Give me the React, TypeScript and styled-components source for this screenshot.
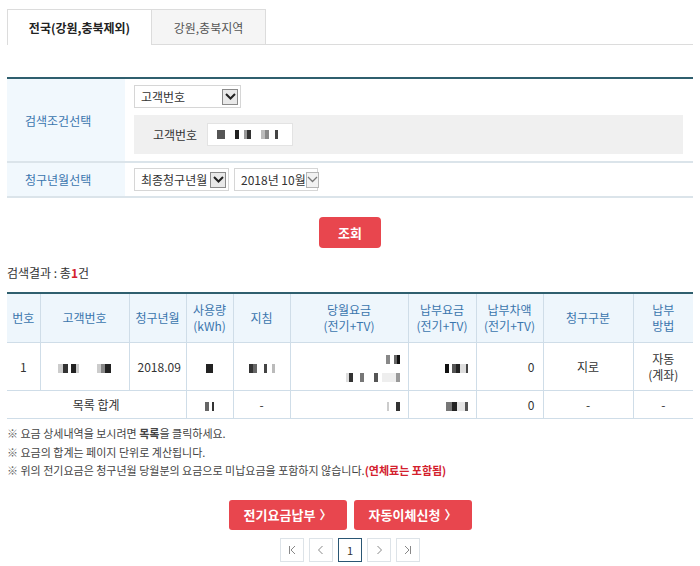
import React from "react";
import styled, { createGlobalStyle } from "styled-components";

type Blk = [number, string];

const GlobalStyle = createGlobalStyle`
  body {
    margin: 0;
    background: #fff;
    font-family: "Noto Sans CJK KR", "Noto Sans", sans-serif;
    font-size: 12px;
    color: #333;
  }
`;

// masked (pixelated) values from the original
const masks: Record<string, Blk[]> = {
    input: [[8, "#555"], [10, "t"], [4, "#222"], [5, "t"], [3, "#999"], [4, "#333"], [10, "t"], [4, "#bbb"], [4, "#888"], [6, "t"], [3, "#444"]],
    custNo: [[5, "#ccc"], [5, "#333"], [3, "t"], [5, "#222"], [3, "#ccc"], [18, "t"], [4, "#ccc"], [4, "#888"], [6, "#222"]],
    usage: [[7, "#222"]],
    meter: [[4, "#333"], [4, "#666"], [7, "t"], [3, "#444"], [5, "t"], [3, "#bbb"]],
    bill1: [[4, "#888"], [4, "t"], [3, "#666"], [3, "#111"]],
    bill2: [[3, "#ddd"], [4, "#333"], [7, "t"], [4, "#777"], [10, "t"], [4, "#555"], [4, "t"], [14, "#eee"], [4, "#999"]],
    paid: [[4, "#111"], [3, "t"], [4, "#555"], [4, "#222"], [6, "#ddd"], [2, "#444"]],
    sumUsage: [[4, "#666"], [3, "t"], [2, "#333"]],
    sumBill: [[2, "#ccc"], [7, "t"], [4, "#333"]],
    sumPaid: [[6, "#777"], [5, "#222"], [8, "#e5e5e5"], [3, "#555"]],
};

function Masked({ name }: { name: string }) {
    return (
        <MaskRow>
            {masks[name].map(([w, c], i) => (
                <Pix key={i} $w={w} $c={c === "t" ? "transparent" : c} />
            ))}
        </MaskRow>
    );
}

function Chevron({ light }: { light?: boolean }) {
    return (
        <ArrowBox $light={light}>
            <svg width="11" height="7" viewBox="0 0 11 7">
                <path d="M1 1 L5.5 5.5 L10 1" fill="none" stroke={light ? "#777" : "#222"} strokeWidth={light ? 1.3 : 2} />
            </svg>
        </ArrowBox>
    );
}

function Select({ label, width, light }: { label: string; width: number; light?: boolean }) {
    return (
        <SelectBox $w={width}>
            <span>{label}</span>
            <Chevron light={light} />
        </SelectBox>
    );
}

function PageIcon({ d }: { d: string }) {
    return (
        <svg width="10" height="10" viewBox="0 0 10 10">
            <path d={d} fill="none" stroke="#888" strokeWidth="1" />
        </svg>
    );
}

function App() {
    return (
        <Page>
            <GlobalStyle />
            <TabBar>
                <Tab $active>전국(강원,충북제외)</Tab>
                <Tab>강원,충북지역</Tab>
            </TabBar>

            <FormTable>
                <tbody>
                    <tr>
                        <Label>검색조건선택</Label>
                        <Field>
                            <Select label="고객번호" width={107} />
                            <CondBox>
                                <span>고객번호</span>
                                <InputBox><Masked name="input" /></InputBox>
                            </CondBox>
                        </Field>
                    </tr>
                    <tr>
                        <Label>청구년월선택</Label>
                        <Field>
                            <Inline>
                                <Select label="최종청구년월" width={95} />
                                <Select label="2018년 10월" width={84} light />
                            </Inline>
                        </Field>
                    </tr>
                </tbody>
            </FormTable>

            <Center>
                <SearchButton>조회</SearchButton>
            </Center>

            <ResultCount>검색결과 : 총<b>1</b>건</ResultCount>

            <DataTable>
                <colgroup>
                    {[33, 89, 57, 47, 57, 118, 68, 67, 90, 60].map((w, i) => (
                        <col key={i} style={{ width: w }} />
                    ))}
                </colgroup>
                <thead>
                    <tr>
                        <Th>번호</Th>
                        <Th>고객번호</Th>
                        <Th>청구년월</Th>
                        <Th>사용량<br />(kWh)</Th>
                        <Th>지침</Th>
                        <Th>당월요금<br />(전기+TV)</Th>
                        <Th>납부요금<br />(전기+TV)</Th>
                        <Th>납부차액<br />(전기+TV)</Th>
                        <Th>청구구분</Th>
                        <Th>납부<br />방법</Th>
                    </tr>
                </thead>
                <tbody>
                    <DataRow>
                        <Td>1</Td>
                        <Td><Masked name="custNo" /></Td>
                        <Td>2018.09</Td>
                        <Td><Masked name="usage" /></Td>
                        <Td><Masked name="meter" /></Td>
                        <Td $align="right"><MaskStack><Masked name="bill1" /><Masked name="bill2" /></MaskStack></Td>
                        <Td $align="right"><Masked name="paid" /></Td>
                        <Td $align="right">0</Td>
                        <Td>지로</Td>
                        <Td>자동<br />(계좌)</Td>
                    </DataRow>
                    <SumRow>
                        <Td colSpan={3}>목록 합계</Td>
                        <Td><Masked name="sumUsage" /></Td>
                        <Td>-</Td>
                        <Td $align="right"><Masked name="sumBill" /></Td>
                        <Td $align="right"><Masked name="sumPaid" /></Td>
                        <Td $align="right">0</Td>
                        <Td>-</Td>
                        <Td>-</Td>
                    </SumRow>
                </tbody>
            </DataTable>

            <Notes>
                <li>요금 상세내역을 보시려면 <b>목록</b>을 클릭하세요.</li>
                <li>요금의 합계는 페이지 단위로 계산됩니다.</li>
                <li>위의 전기요금은 청구년월 당월분의 요금으로 미납요금을 포함하지 않습니다.<Red>(연체료는 포함됨)</Red></li>
            </Notes>

            <Center>
                <Actions>
                    <ActionButton>전기요금납부 <Gt>〉</Gt></ActionButton>
                    <ActionButton>자동이체신청 <Gt>〉</Gt></ActionButton>
                </Actions>
            </Center>

            <Pager>
                <PageBtn><PageIcon d="M2.5 1 V9 M8 1 L4 5 L8 9" /></PageBtn>
                <PageBtn><PageIcon d="M6.5 1 L2.5 5 L6.5 9" /></PageBtn>
                <PageBtn $active>1</PageBtn>
                <PageBtn><PageIcon d="M3.5 1 L7.5 5 L3.5 9" /></PageBtn>
                <PageBtn><PageIcon d="M2 1 L6 5 L2 9 M7.5 1 V9" /></PageBtn>
            </Pager>
        </Page>
    );
}

const Page = styled.div`
    width: 686px;
    padding: 9px 7px 0;
`;

const TabBar = styled.div`
    display: flex;
    height: 35px;
    border-bottom: 1px solid #dcdcdc;
`;

const Tab = styled.div<{ $active?: boolean }>`
    display: flex;
    align-items: center;
    justify-content: center;
    box-sizing: border-box;
    width: ${(p) => (p.$active ? 145 : 114)}px;
    height: ${(p) => (p.$active ? 36 : 35)}px;
    border: 1px solid #dcdcdc;
    border-bottom: none;
    border-left-width: ${(p) => (p.$active ? 1 : 0)}px;
    background: ${(p) => (p.$active ? "#fff" : "#f5f5f5")};
    color: ${(p) => (p.$active ? "#222" : "#555")};
    font-weight: ${(p) => (p.$active ? 700 : 400)};
    font-size: 12px;
`;

const FormTable = styled.table`
    width: 686px;
    margin-top: 32px;
    border-collapse: collapse;
    border-top: 2px solid #2f5f6e;
    tr + tr td, tr + tr th {
        border-top: 2px solid #dbe4ea;
    }
    tr:last-child td, tr:last-child th {
        border-bottom: 2px solid #dbe4ea;
    }
    tr + tr td {
        padding-top: 5px;
        padding-bottom: 5px;
    }
`;

const Label = styled.th`
    width: 118px;
    padding: 0 0 0 18px;
    box-sizing: border-box;
    background: #f1f8fd;
    color: #3a75ad;
    font-weight: 400;
    font-size: 12px;
    text-align: left;
`;

const Field = styled.td`
    padding: 6px 10px 7px 9px;
`;

const Inline = styled.div`
    display: flex;
    gap: 5px;
`;

const SelectBox = styled.div<{ $w: number }>`
    display: flex;
    align-items: center;
    justify-content: space-between;
    box-sizing: border-box;
    width: ${(p) => p.$w}px;
    height: 23px;
    padding: 0 2px 0 6px;
    border: 1px solid #d6d6d6;
    background: #fff;
    color: #333;
    font-size: 12px;
    white-space: nowrap;
`;

const ArrowBox = styled.span<{ $light?: boolean }>`
    display: flex;
    align-items: center;
    justify-content: center;
    width: 16px;
    height: 16px;
    box-sizing: border-box;
    border: 1px solid ${(p) => (p.$light ? "#b5b5b5" : "#8a8a8a")};
    background: ${(p) => (p.$light ? "#f2f2f2" : "#e9e9e9")};
`;

const CondBox = styled.div`
    display: flex;
    align-items: center;
    gap: 10px;
    height: 39px;
    margin-top: 7px;
    padding-left: 19px;
    background: #f0f0f0;
    color: #333;
`;

const InputBox = styled.div`
    display: flex;
    align-items: center;
    width: 86px;
    height: 23px;
    padding-left: 9px;
    box-sizing: border-box;
    background: #fff;
    border: 1px solid #e3e3e3;
`;

const MaskRow = styled.span`
    display: inline-flex;
    align-items: center;
    height: 9px;
    vertical-align: middle;
`;

const MaskStack = styled.span`
    display: inline-flex;
    flex-direction: column;
    align-items: flex-end;
    gap: 9px;
`;

const Pix = styled.span<{ $w: number; $c: string }>`
    display: inline-block;
    width: ${(p) => p.$w}px;
    height: 9px;
    background: ${(p) => p.$c};
`;

const Center = styled.div`
    display: flex;
    justify-content: center;
`;

const SearchButton = styled.button`
    margin-top: 19px;
    width: 62px;
    height: 31px;
    border: none;
    border-radius: 4px;
    background: #e8464e;
    color: #fff;
    font-family: inherit;
    font-size: 13px;
    font-weight: 700;
`;

const ResultCount = styled.div`
    margin-top: 16px;
    font-size: 12px;
    color: #333;
    b {
        color: #d3202d;
        font-weight: 700;
    }
`;

const DataTable = styled.table`
    width: 686px;
    margin-top: 11px;
    border-collapse: collapse;
    table-layout: fixed;
    border-top: 2px solid #2f5f6e;
    td, th {
        border: 1px solid #cfdde8;
    }
    tr > :first-child { border-left: none; }
    tr > :last-child { border-right: none; }
`;

const Th = styled.th`
    height: 48px;
    padding: 0;
    background: #eef6fc;
    color: #3a75ad;
    font-weight: 400;
    font-size: 12px;
    line-height: 16px;
`;

const DataRow = styled.tr`
    height: 48px;
`;

const SumRow = styled.tr`
    height: 28px;
`;

const Td = styled.td<{ $align?: string }>`
    padding: 0 8px;
    text-align: ${(p) => p.$align || "center"};
    color: #333;
    font-size: 12px;
    line-height: 16px;
`;

const Notes = styled.ul`
    list-style: none;
    margin: 5px 0 0;
    padding: 0;
    font-size: 11px;
    color: #444;
    li {
        line-height: 18.5px;
    }
    li::before {
        content: "※ ";
        color: #666;
    }
    b { font-weight: 700; }
`;

const Red = styled.span`
    color: #d3202d;
    font-weight: 700;
`;

const Actions = styled.div`
    display: flex;
    gap: 7px;
    margin-top: 20px;
`;

const ActionButton = styled.button`
    display: flex;
    align-items: center;
    justify-content: center;
    gap: 4px;
    width: 118px;
    height: 30px;
    border: none;
    border-radius: 3px;
    background: #e8464e;
    color: #fff;
    font-family: inherit;
    font-size: 13px;
    font-weight: 700;
`;

const Gt = styled.span`
    font-size: 12px;
`;

const Pager = styled.div`
    display: flex;
    justify-content: center;
    gap: 5px;
    margin-top: 8px;
`;

const PageBtn = styled.div<{ $active?: boolean }>`
    display: flex;
    align-items: center;
    justify-content: center;
    width: 24px;
    height: 24px;
    box-sizing: border-box;
    border: 1px solid ${(p) => (p.$active ? "#2a5674" : "#dde3e8")};
    color: #333;
    font-size: 11px;
`;

export default App;
